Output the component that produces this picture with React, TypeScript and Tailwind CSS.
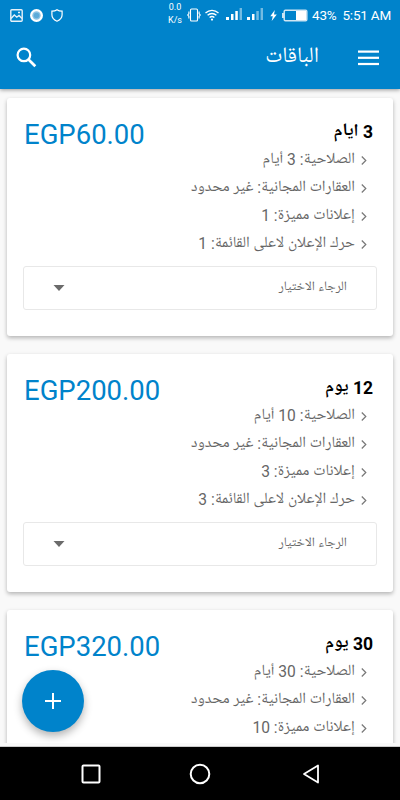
import React from 'react'

type Plan = {
  title: string
  price: string
  features: string[]
  options?: string
}

const plans: Plan[] = [
  {
    title: '3 ايام',
    price: 'EGP60.00',
    features: ['الصلاحية: 3 أيام', 'العقارات المجانية: غير محدود', 'إعلانات مميزة: 1', 'حرك الإعلان لاعلى القائمة: 1'],
    options: 'الرجاء الاختيار',
  },
  {
    title: '12 يوم',
    price: 'EGP200.00',
    features: ['الصلاحية: 10 أيام', 'العقارات المجانية: غير محدود', 'إعلانات مميزة: 3', 'حرك الإعلان لاعلى القائمة: 3'],
    options: 'الرجاء الاختيار',
  },
  {
    title: '30 يوم',
    price: 'EGP320.00',
    features: ['الصلاحية: 30 أيام', 'العقارات المجانية: غير محدود', 'إعلانات مميزة: 10'],
  },
]

const SignalIcon = ({ bars }: { bars: number }) => (
  <svg width="17" height="14" viewBox="0 0 17 14" fill="#fff">
    <rect x="0" y="10" width="3" height="3" />
    <rect x="5" y="7" width="2.5" height="6" />
    <rect x="9.3" y="4" width="2.5" height="9" opacity={bars > 2 ? 1 : 0.45} />
    <rect x="13.6" y="1" width="2.4" height="12" opacity={0.45} />
  </svg>
)

const StatusBar = () => (
  <div className="flex h-[30px] shrink-0 items-center pl-[10px] pr-[9px] text-white">
    <svg width="13" height="13" viewBox="0 0 13 13" fill="none" stroke="#e6f1f9" strokeWidth="1.4">
      <rect x="0.8" y="0.8" width="11.4" height="11.4" rx="1" />
      <path d="M1 9.5 4.3 6l2.5 2.2L9 6.5l3 3" />
      <path d="M8 3.5h2" />
    </svg>
    <svg className="ml-[7px]" width="13" height="13" viewBox="0 0 13 13">
      <circle cx="6.5" cy="6.5" r="6.5" fill="#fff" />
      <circle cx="6.5" cy="6.5" r="4.2" fill="#8cc3e4" />
      <circle cx="6.5" cy="6.5" r="2.8" fill="#5dabd9" />
    </svg>
    <svg className="ml-2" width="12" height="13" viewBox="0 0 12 13" fill="none" stroke="#fff" strokeWidth="1.2">
      <path d="M6 .8C4.6 1.8 2.8 2.2.9 2.2v3.6C.9 8.8 3 11 6 12.2c3-1.2 5.1-3.4 5.1-6.4V2.2C9.2 2.2 7.4 1.8 6 .8Z" />
    </svg>
    <div className="-mt-[3px] ml-[105px] flex w-[14px] flex-col text-center text-[9px] leading-[13px]">
      <span>0.0</span>
      <span>K/s</span>
    </div>
    <svg className="ml-[5px]" width="14" height="14" viewBox="0 0 14 14" fill="none" stroke="#fff" strokeWidth="1.1">
      <rect x="3.5" y="1" width="7" height="12" rx="1" />
      <path d="M1.9 3.5v2.2L.7 7l1.200 1.300v2.200M12.100 3.500v2.200L13.300 7l-1.200 1.300v2.200" />
    </svg>
    <svg className="ml-1" width="14" height="14" viewBox="0 0 14 14" fill="none" stroke="#fff" strokeWidth="1.3">
      <path d="M.5 5c3.700-3.600 9.300-3.600 13 0M2.600 7.300c2.500-2.400 6.300-2.400 8.800 0M4.600 9.600c1.400-1.300 3.400-1.300 4.800 0" />
      <circle cx="7" cy="11.6" r="1.1" fill="#fff" stroke="none" />
    </svg>
    <div className="-mt-[2px] ml-[7px] flex gap-1">
      <SignalIcon bars={3} />
      <SignalIcon bars={2} />
    </div>
    <svg className="ml-[6px]" width="7" height="11" viewBox="0 0 7 11" fill="#fff">
      <path d="M4.800 0 .3 6.200h2.500L1.700 11 6.800 4.500H4Z" />
    </svg>
    <svg className="ml-[5px]" width="26" height="13" viewBox="0 0 26 13">
      <rect x="0" y="4" width="2" height="5" fill="#cfe5f3" />
      <rect x="2.2" y="1.2" width="22.6" height="10.6" rx="1.2" fill="none" stroke="#cfe5f3" strokeWidth="1.5" />
      <rect x="14" y="2" width="10" height="9" fill="#fff" />
    </svg>
    <span className="ml-[4px] text-[13.500px] tracking-[-0.2px]">43%</span>
    <span className="ml-auto text-[13.500px] tracking-[-0.2px]">5:51 AM</span>
  </div>
)

const Toolbar = () => (
  <div className="flex h-[59px] shrink-0 items-center pb-1 pl-[16px] pr-[21px] text-white">
    <svg width="21" height="21" viewBox="0 0 21 21" fill="none" stroke="#fff" strokeWidth="2.2">
      <circle cx="7.9" cy="7.9" r="6.3" />
      <path d="m12.500 12.500 6.800 6.800" strokeWidth="2.7" />
    </svg>
    <h1 className="ml-auto pt-px text-[22px] leading-[30px]" dir="rtl">الباقات</h1>
    <svg className="ml-[39px]" width="21" height="16" viewBox="0 0 21 16" fill="#fff">
      <rect y="0.5" width="21" height="2.2" />
      <rect y="6.7" width="21" height="2.2" />
      <rect y="12.9" width="21" height="2.2" />
    </svg>
  </div>
)

const PlanCard = ({ plan }: { plan: Plan }) => (
  <section className="h-[238px] shrink-0 rounded-[3px] bg-white px-[17px] pt-5 shadow-[0_2px_4px_rgba(0,0,0,0.28)]">
    <div className="flex h-[148px] justify-between">
      <div className="text-[27.500px] leading-[34px] text-[#0083cb]">{plan.price}</div>
      <div className="pr-[3px]" dir="rtl">
        <h2 className="h-7 text-[17.500px] font-bold leading-[28px] text-black">{plan.title}</h2>
        <ul className="pr-[6px]">
          {plan.features.map((feature) => (
            <li key={feature} className="flex h-7 items-center gap-[6px] text-[15.600px] leading-[28px] text-[#666]">
              <svg width="6" height="9" viewBox="0 0 6 9" fill="none" stroke="#777" strokeWidth="1.2">
                <path d="m.8.500 4 4-4 4" />
              </svg>
              <span className="whitespace-nowrap">{feature}</span>
            </li>
          ))}
        </ul>
      </div>
    </div>
    {plan.options && (
      <button className="-ml-px flex h-[44px] w-[354px] items-center justify-between rounded-[3px] border border-[#e8e8e8] px-[29px]">
        <svg width="12" height="6" viewBox="0 0 12 6" fill="#6b6b6b">
          <path d="M.5 0h11L6 6Z" />
        </svg>
        <span className="text-[13.200px] text-[#666]" dir="rtl">{plan.options}</span>
      </button>
    )}
  </section>
)

const NavBar = () => (
  <nav className="flex h-[53px] shrink-0 items-center bg-black pl-[81px]">
    <svg width="20" height="20" viewBox="0 0 20 20" fill="none" stroke="#fff" strokeWidth="2">
      <rect x="1.5" y="1.5" width="17" height="17" rx="1" />
    </svg>
    <svg className="ml-[88px]" width="22" height="22" viewBox="0 0 22 22" fill="none" stroke="#fff" strokeWidth="2">
      <circle cx="11" cy="11" r="9.3" />
    </svg>
    <svg className="ml-[91px]" width="18" height="20" viewBox="0 0 18 20" fill="none" stroke="#fff" strokeWidth="1.8" strokeLinejoin="round">
      <path d="M16 1.500v17L2 10Z" />
    </svg>
  </nav>
)

const App = () => {
  return (
    <div className="relative flex h-[800px] w-[400px] flex-col overflow-hidden bg-[#f9f9f9] font-[Roboto,'Noto_Naskh_Arabic_UI','Noto_Naskh_Arabic','DejaVu_Sans',sans-serif]">
      <header className="z-10 shrink-0 bg-[#0083cb] shadow-[0_1px_4px_rgba(0,0,0,0.4)]">
        <StatusBar />
        <Toolbar />
      </header>
      <main className="flex min-h-0 flex-1 flex-col gap-[18px] overflow-hidden px-[7px] pt-[9px]">
        {plans.map((plan) => (
          <PlanCard key={plan.title} plan={plan} />
        ))}
      </main>
      <div className="h-1 shrink-0 border-b border-[#ccc] bg-[#f9f9f9]" />
      <NavBar />
      <button className="absolute left-[22px] top-[670px] flex size-[62px] items-center justify-center rounded-full bg-[#0083cb] shadow-[0_4px_8px_rgba(0,0,0,0.3)]">
        <svg width="16" height="16" viewBox="0 0 16 16" stroke="#fff" strokeWidth="2">
          <path d="M8 0v16M0 8h16" />
        </svg>
      </button>
    </div>
  )
}

export default App
